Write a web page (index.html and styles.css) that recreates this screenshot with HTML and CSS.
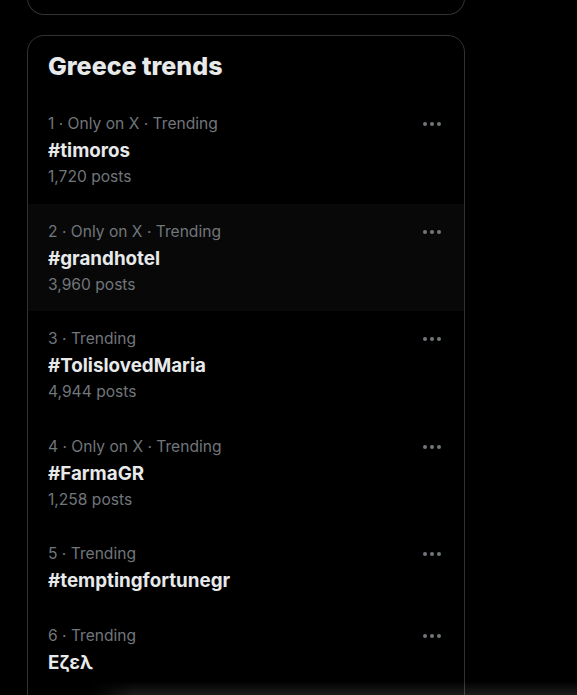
FILE: index.html
```html
<!DOCTYPE html>
<html lang="en">
<head>
<meta charset="utf-8">
<title>Greece trends</title>
<link rel="stylesheet" href="styles.css">
</head>
<body>
<div class="column">
  <div class="prev-card"></div>
  <section class="card">
    <h2 class="card-title">Greece trends</h2>
    <div class="trend">
      <div class="trend-body">
        <div class="meta">1 · Only on X · Trending</div>
        <div class="name">#timoros</div>
        <div class="posts">1,720 posts</div>
      </div>
      <svg class="more" viewBox="0 0 24 24"><circle cx="5" cy="12" r="2"/><circle cx="12" cy="12" r="2"/><circle cx="19" cy="12" r="2"/></svg>
    </div>
    <div class="trend hover">
      <div class="trend-body">
        <div class="meta">2 · Only on X · Trending</div>
        <div class="name">#grandhotel</div>
        <div class="posts">3,960 posts</div>
      </div>
      <svg class="more" viewBox="0 0 24 24"><circle cx="5" cy="12" r="2"/><circle cx="12" cy="12" r="2"/><circle cx="19" cy="12" r="2"/></svg>
    </div>
    <div class="trend">
      <div class="trend-body">
        <div class="meta">3 · Trending</div>
        <div class="name">#TolislovedMaria</div>
        <div class="posts">4,944 posts</div>
      </div>
      <svg class="more" viewBox="0 0 24 24"><circle cx="5" cy="12" r="2"/><circle cx="12" cy="12" r="2"/><circle cx="19" cy="12" r="2"/></svg>
    </div>
    <div class="trend">
      <div class="trend-body">
        <div class="meta">4 · Only on X · Trending</div>
        <div class="name">#FarmaGR</div>
        <div class="posts">1,258 posts</div>
      </div>
      <svg class="more" viewBox="0 0 24 24"><circle cx="5" cy="12" r="2"/><circle cx="12" cy="12" r="2"/><circle cx="19" cy="12" r="2"/></svg>
    </div>
    <div class="trend">
      <div class="trend-body">
        <div class="meta">5 · Trending</div>
        <div class="name">#temptingfortunegr</div>
      </div>
      <svg class="more" viewBox="0 0 24 24"><circle cx="5" cy="12" r="2"/><circle cx="12" cy="12" r="2"/><circle cx="19" cy="12" r="2"/></svg>
    </div>
    <div class="trend">
      <div class="trend-body">
        <div class="meta">6 · Trending</div>
        <div class="name">Εζελ</div>
      </div>
      <svg class="more" viewBox="0 0 24 24"><circle cx="5" cy="12" r="2"/><circle cx="12" cy="12" r="2"/><circle cx="19" cy="12" r="2"/></svg>
    </div>
  </section>
</div>
<div class="drawer-shadow"></div>
</body>
</html>
```

FILE: styles.css
```css
html, body {
  margin: 0;
  padding: 0;
  background: #000;
  height: 100%;
  overflow: hidden;
}
body {
  font-family: "Inter", "Noto Sans", sans-serif;
  color: #e7e9ea;
}
.column {
  width: 438px;
  margin-left: 27px;
}
.prev-card {
  height: 40px;
  margin-top: -26px;
  border: 1px solid #2f3336;
  border-top: none;
  border-radius: 0 0 17px 17px;
}
.card {
  margin-top: 20px;
  padding-bottom: 60px;
  border: 1px solid #2f3336;
  border-radius: 17px;
  overflow: hidden;
}
.card-title {
  margin: 0;
  padding: 0 20px;
  height: 60px;
  line-height: 60px;
  font-size: 25px;
  font-weight: 800;
  color: #e7e9ea;
}
.trend {
  display: flex;
  justify-content: space-between;
  align-items: flex-start;
  padding: 15px 20px 14px;
}
.trend.hover {
  background: #080808;
}
.meta {
  height: 26px;
  line-height: 26px;
  font-size: 15.6px;
  color: #71767b;
}
.name {
  height: 27px;
  line-height: 27px;
  font-size: 18.8px;
  font-weight: 700;
  color: #e7e9ea;
}
.posts {
  height: 25.5px;
  line-height: 25.5px;
  font-size: 15.6px;
  color: #71767b;
}
.more {
  width: 24px;
  height: 24px;
  margin-top: 1px;
  fill: #71767b;
}
.drawer-shadow {
  position: fixed;
  left: 90px;
  right: 0;
  bottom: 0;
  height: 14px;
  background: linear-gradient(to bottom, rgba(255, 255, 255, 0), rgba(255, 255, 255, 0.11));
  -webkit-mask-image: linear-gradient(to right, transparent 0, #000 45px);
  mask-image: linear-gradient(to right, transparent 0, #000 45px);
  pointer-events: none;
}
```
